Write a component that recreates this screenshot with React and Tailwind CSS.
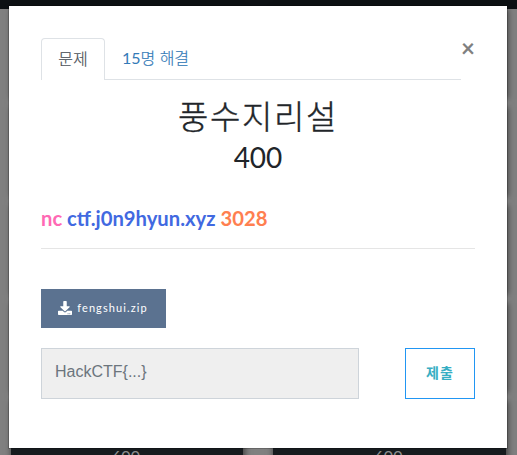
const rows = [
  { id: 1, points: 600 },
  { id: 2, points: 600 },
  { id: 3, points: 600 },
  { id: 4, points: 600 },
  { id: 5, points: 600 },
];

function Card({ points }) {
  return (
    <div className="flex h-[88px] items-end justify-center bg-[#161b1e] pb-[21px] pr-[2px] text-[16px] leading-6 text-[#8c8c8c] shadow-[1px_1px_6px_1px_rgba(0,0,0,0.5)]">
      {points}
    </div>
  );
}

function DownloadIcon() {
  return (
    <svg viewBox="0 0 512 512" className="h-[14px] w-[14px]" fill="currentColor">
      <path d="M216 0h80c13.300 0 24 10.700 24 24v168h87.700c17.800 0 26.700 21.500 14.100 34.100L269.700 378.300c-7.500 7.500-19.800 7.500-27.300 0L90.100 226.100c-12.600-12.600-3.700-34.100 14.100-34.100H192V24c0-13.300 10.700-24 24-24zm296 376v112c0 13.300-10.700 24-24 24H24c-13.300 0-24-10.700-24-24V376c0-13.300 10.700-24 24-24h146.700l49 49c20.100 20.100 52.500 20.100 72.600 0l49-49H488c13.300 0 24 10.700 24 24zm-124 88c0-11-9-20-20-20s-20 9-20 20 9 20 20 20 20-9 20-20zm64 0c0-11-9-20-20-20s-20 9-20 20 9 20 20 20 20-9 20-20z" />
    </svg>
  );
}

export default function App() {
  return (
    <div className="relative h-[455px] overflow-hidden bg-[#808080] font-['Lato','Noto_Sans_CJK_KR',sans-serif]">
      <div className="h-[9px] bg-[#0d1114]" />
      <div className="grid grid-cols-[232px_233px] gap-x-[30px] gap-y-[10px] pl-[11px]">
        {rows.map((row) => (
          <div key={row.id} className="contents">
            <Card points={row.points} />
            <Card points={row.points} />
          </div>
        ))}
      </div>

      <div className="absolute left-[8px] top-[5px] h-[444px] w-[500px] border border-black/20 bg-white bg-clip-padding px-8 pt-8">
        <div className="flex">
          <div className="flex h-[42px] w-[420px] border-b border-[#dee2e6]">
            <div className="h-[42px] w-16 rounded-t border border-b-0 border-[#dee2e6] bg-white text-center font-['Noto_Sans_CJK_KR',sans-serif] text-[16px] font-light leading-[38px] text-[#495057] [-webkit-text-stroke:0.2px]">
              문제
            </div>
            <div className="whitespace-nowrap pl-[17px] text-[16px] leading-10 text-[#337ab7]">
              15<span className="font-light [-webkit-text-stroke:0.2px]">명 해결</span>
            </div>
          </div>
          <button className="-mt-[2px] h-6 text-[24px] font-bold leading-6 text-[#808080]">×</button>
        </div>

        <h3 className="mt-[16px] text-center text-[33px] font-light leading-[40px] tracking-[1.6px] text-[#212529] [-webkit-text-stroke:0.4px]">풍수지리설</h3>
        <h3 className="text-center text-[28px] leading-[42px] text-[#212529]">400</h3>

        <p className="mt-[25px] whitespace-nowrap text-[20.25px] font-bold leading-[30px] text-[#4169e1]">
          <span className="text-[#ff69b4]">nc</span> ctf.j0n9hyun.xyz <span className="text-[#ff7f50]">3028</span>
        </p>
        <div className="mt-[15px] h-px bg-[#e5e5e5]" />

        <button className="mt-[40px] flex h-[39px] w-[125px] items-center justify-center gap-[5px] bg-[#5b7290] pb-px pr-[2px] text-[11px] tracking-[1.1px] text-white">
          <DownloadIcon />
          <span className="-mr-px">fengshui.zip</span>
        </button>

        <div className="mt-5 flex justify-between">
          <input
            className="h-[51px] w-[318px] border border-[#ced4da] bg-[#efefef] px-[13px] pb-[4px] font-['Liberation_Sans',sans-serif] text-[16px] placeholder:text-[#6c757d]"
            placeholder="HackCTF{...}"
          />
          <button className="h-[51px] w-[70px] border border-[#2196f3] bg-white pb-[3px] text-[14px] font-bold tracking-[1px] text-[#37aec3]">
            제출
          </button>
        </div>
      </div>
    </div>
  );
}
